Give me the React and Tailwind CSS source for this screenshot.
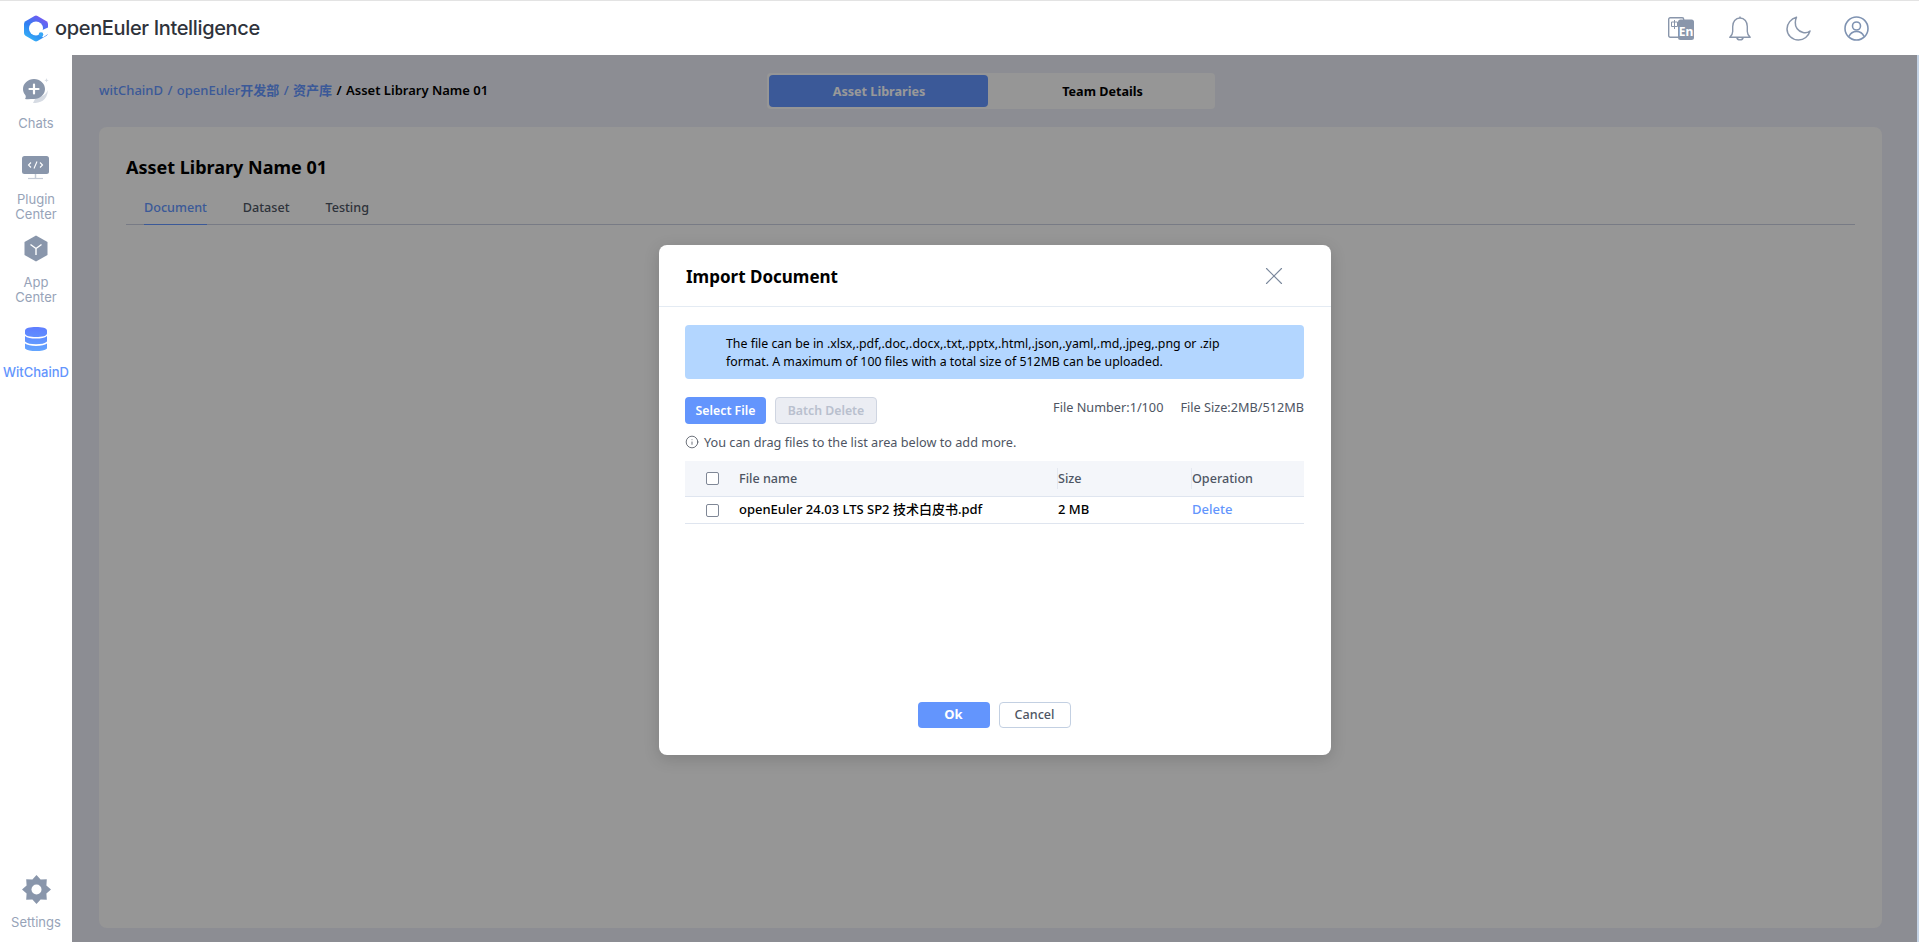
import { X, Info } from 'lucide-react';

const font = 'font-["Noto_Sans","Noto_Sans_CJK_SC",sans-serif]';

function Logo() {
    return (
        <svg width="24" height="27" viewBox="0 0 24 27" fill="none">
            <defs>
                <linearGradient id="logo-g" x1="4" y1="25" x2="20" y2="1" gradientUnits="userSpaceOnUse">
                    <stop offset="0" stopColor="#35b4f6" />
                    <stop offset="0.45" stopColor="#2f7ff2" />
                    <stop offset="1" stopColor="#8054f2" />
                </linearGradient>
            </defs>
            <path d="M10.5 1 Q12 .2 13.5 1 L22.5 6.3 Q24 7.2 24 9 V18 Q24 19.8 22.5 20.7 L13.5 26 Q12 26.8 10.5 26 L1.5 20.7 Q0 19.8 0 18 V9 Q0 7.2 1.5 6.3 Z" fill="url(#logo-g)" />
            <circle cx="12" cy="13.5" r="7" fill="#fff" />
            <path d="M14 17 L24 12.5 V19 L19 22.5 Z" fill="#fff" />
            <circle cx="17" cy="19.6" r="2.3" fill="#37a6f6" />
        </svg>
    );
}

function ChatsIcon() {
    return (
        <svg width="26" height="26" viewBox="0 0 26 26" fill="none">
            <path d="M10 25 C17 25 24 23 25 12 C23 17 18 19.5 13 19 Z" fill="#d6dbe3" />
            <path d="M23.5 0 l.6 1.7 1.6.6-1.6.6-.6 1.7-.6-1.7-1.6-.6 1.6-.6z" fill="#d6dbe3" />
            <path d="M11 1 C17 1 22 5.5 22 11 C22 16.5 17 21 11 21 C8 21 5 21.5 2 21 C3 20 3 18 2.3 17 C.8 15.4 0 13.2 0 11 C0 5.5 5 1 11 1 Z" fill="#8996ab" />
            <path d="M11 6.5 V15.5 M6.5 11 H15.5" stroke="#fff" strokeWidth="2.2" strokeLinecap="round" />
        </svg>
    );
}

function PluginIcon() {
    return (
        <svg width="27" height="24" viewBox="0 0 27 24" fill="none">
            <rect x="0" y="0" width="27" height="18" rx="2.5" fill="#8996ab" />
            <path d="M13.5 18 V22" stroke="#c5ccd7" strokeWidth="1.5" />
            <path d="M6 22.5 H21" stroke="#c5ccd7" strokeWidth="1.2" />
            <path d="M9 6.5 L6.5 9 L9 11.5 M18 6.5 L20.5 9 L18 11.5 M15 5.5 L12 12.5" stroke="#fff" strokeWidth="1.1" />
        </svg>
    );
}

function AppIcon() {
    return (
        <svg width="24" height="27" viewBox="0 0 24 27" fill="none">
            <path d="M12 .5 L23.5 7 V20 L12 26.5 L.5 20 V7 Z" fill="#8996ab" />
            <path d="M12 13.5 V20 M12 13.5 L6.5 9.5 M12 13.5 L17.5 9.5" stroke="#fff" strokeWidth="1.4" />
        </svg>
    );
}

function DatabaseIcon() {
    return (
        <svg width="22" height="24" viewBox="0 0 22 24" fill="none">
            <defs>
                <linearGradient id="db-g" x1="0" y1="0" x2="0" y2="24" gradientUnits="userSpaceOnUse">
                    <stop offset="0" stopColor="#5e7dff" />
                    <stop offset="1" stopColor="#63a5ff" />
                </linearGradient>
            </defs>
            <path d="M0 3.5 C0 1 5 0 11 0 C17 0 22 1 22 3.5 V6.5 C22 9 17 10 11 10 C5 10 0 9 0 6.5 Z" fill="url(#db-g)" />
            <path d="M0 9 C2 11 6 11.6 11 11.6 C16 11.6 20 11 22 9 V14.5 C20 16.6 16 17.2 11 17.2 C6 17.2 2 16.6 0 14.5 Z" fill="url(#db-g)" />
            <path d="M0 16.6 C2 18.4 6 18.9 11 18.9 C16 18.9 20 18.4 22 16.6 V21.5 C20 23.4 16 24 11 24 C6 24 2 23.4 0 21.5 Z" fill="url(#db-g)" />
        </svg>
    );
}

function SettingsIcon() {
    return (
        <svg width="29" height="29" viewBox="0 0 29 29" fill="none">
            <path
                d="M14.5 0 L18.6 4.6 L24.8 4.2 L24.4 10.4 L29 14.5 L24.4 18.6 L24.8 24.8 L18.6 24.4 L14.5 29 L10.4 24.4 L4.2 24.8 L4.6 18.6 L0 14.5 L4.6 10.4 L4.2 4.2 L10.4 4.6 Z"
                fill="#8996ab"
            />
            <circle cx="14.5" cy="14.5" r="5" fill="#fff" />
        </svg>
    );
}

function LangIcon() {
    return (
        <svg width="26" height="23" viewBox="0 0 26 23" fill="none">
            <rect x=".7" y=".7" width="15" height="19.5" rx="1.5" stroke="#8996ab" strokeWidth="1.4" />
            <path d="M3.5 5 H9.5 V9.5 H3.5 Z M6.5 3 V12" stroke="#8996ab" strokeWidth="1" />
            <rect x="10" y="2.5" width="16" height="20.5" rx="2.5" fill="#8996ab" />
            <text x="18" y="19" textAnchor="middle" fill="#fff" fontSize="12" fontWeight="700" fontFamily="Noto Sans">En</text>
        </svg>
    );
}

function BellIcon() {
    return (
        <svg width="22" height="25" viewBox="0 0 22 25" fill="none" stroke="#8996ab" strokeWidth="1.4" strokeLinejoin="round">
            <path d="M11 2 C6.5 2 3.7 6 3.7 10.5 V15.5 C3.7 18 2.2 20 .8 21.2 H21.2 C19.8 20 18.3 18 18.3 15.5 V10.5 C18.3 6 15.5 2 11 2 Z" />
            <path d="M11 2 V.5" />
            <path d="M7.8 21.5 C8.4 24.6 13.6 24.6 14.2 21.5" />
        </svg>
    );
}

function MoonIcon() {
    return (
        <svg width="25" height="25" viewBox="0 0 25 25" fill="none" stroke="#8996ab" strokeWidth="1.5" strokeLinejoin="round">
            <path d="M10.5 1.2 C5 2.8 1 7.5 1 13 C1 19 6 24 12.5 24 C18 24 22.5 20.3 24 15 C22 16.6 19.5 17.1 17 16.5 C12 15.4 9 11 9.3 6.5 C9.4 4.5 9.7 2.8 10.5 1.2 Z" />
        </svg>
    );
}

function UserIcon() {
    return (
        <svg width="25" height="25" viewBox="0 0 25 25" fill="none" stroke="#7f93b2" strokeWidth="1.6">
            <circle cx="12.5" cy="12.5" r="11.5" />
            <circle cx="12.5" cy="10" r="4" />
            <path d="M5 20.5 C6.5 17 9 15.5 12.5 15.5 C16 15.5 18.5 17 20 20.5" />
        </svg>
    );
}

function NavItem({ icon, label, active, className }) {
    return (
        <div className={`flex flex-col items-center ${className}`}>
            {icon}
            <div className={`text-center text-[13px] leading-[15px] font-["Inter",sans-serif] ${active ? 'text-[#6395fd] font-medium' : 'text-[#97a3b8]'}`}>
                {label}
            </div>
        </div>
    );
}

function Checkbox() {
    return <span className="block w-[13px] h-[13px] rounded-[2px] border border-[#7f8796] bg-white" />;
}

export default function App() {
    return (
        <div className={`w-full h-[942px] flex flex-col overflow-hidden bg-white ${font}`}>
            <header className="h-[55px] shrink-0 border-t border-[#e3e3e3] flex items-center pl-[24px]">
                <Logo />
                <div className='ml-[7px] text-[20px] font-["Inter",sans-serif] font-medium text-[#2f333b] tracking-[-0.35px]'>openEuler Intelligence</div>
                <div className="ml-auto flex items-center pr-[50px]">
                    <LangIcon />
                    <div className="ml-[35px]"><BellIcon /></div>
                    <div className="ml-[35px]"><MoonIcon /></div>
                    <div className="ml-[33px]"><UserIcon /></div>
                </div>
            </header>

            <div className="flex-1 flex min-h-0 bg-[#c3d2e4]">
                <aside className="w-[72px] shrink-0 flex flex-col items-center bg-white pt-[23px] pb-[12px]">
                    <NavItem icon={<ChatsIcon />} label="Chats" className="gap-[12px]" />
                    <NavItem icon={<PluginIcon />} label={<>Plugin<br />Center</>} className="mt-[25px] gap-[12px]" />
                    <NavItem icon={<AppIcon />} label={<>App<br />Center</>} className="mt-[13px] gap-[13px]" />
                    <NavItem icon={<DatabaseIcon />} label="WitChainD" active className="mt-[22px] gap-[14px]" />
                    <NavItem icon={<SettingsIcon />} label="Settings" className="mt-auto gap-[11px]" />
                </aside>

                <main className="relative flex-1 mr-[2px] bg-[#eaebf5] flex flex-col pl-[27px] pr-[35px] pb-[14px]">
                    <div className="h-[72px] shrink-0 flex items-center relative">
                        <div className="text-[13px] font-medium text-[#6395fd]">
                            witChainD <span className="mx-[1px]">/</span> openEuler<span className="font-bold">开发部</span> <span className="mx-[1px]">/</span> <span className="font-bold">资产库</span> <span className="text-black font-semibold"><span className="mx-[1px]">/</span> Asset Library Name 01</span>
                        </div>
                        <div className="absolute left-[668px] top-[18px] w-[448px] h-[36px] bg-[#fafafa] rounded-[4px] p-[2px] flex text-[12.6px] font-bold pt-[3px]">
                            <div className="w-[219px] -mt-px rounded-[4px] bg-[#6395fd] text-white flex items-center justify-center pt-[2px] pl-[1px]">Asset Libraries</div>
                            <div className="flex-1 text-black flex items-center justify-center pt-[2px] pl-[4px]">Team Details</div>
                        </div>
                    </div>

                    <section className="flex-1 bg-[#fafafa] rounded-[8px] px-[27px]">
                        <h1 className="mt-[27px] text-[18px] leading-[26px] font-bold text-black">Asset Library Name 01</h1>
                        <div className="mt-[16px] flex border-b border-[#c9cede] text-[12.6px] font-medium text-[#4e5563] h-[29px]">
                            <div className="ml-[18px] text-[#6395fd] border-b border-[#6395fd] h-[29px] leading-[24px]">Document</div>
                            <div className="ml-[36px] leading-[24px]">Dataset</div>
                            <div className="ml-[36px] leading-[24px]">Testing</div>
                        </div>
                    </section>

                    <div className="absolute inset-0 bg-black/40 flex items-center justify-center">
                        <div className="w-[672px] h-[510px] mt-[3px] ml-[1px] bg-white rounded-[8px] shadow-[0_4px_16px_rgba(0,0,0,0.15)] flex flex-col">
                            <div className="h-[62px] shrink-0 border-b border-[#e4ebf3] flex items-center justify-between pl-[27px] pr-[42px]">
                                <div className="text-[17px] font-bold text-black pt-[3px]">Import Document</div>
                                <X size={30} strokeWidth={0.9} className="text-[#7a889c]" />
                            </div>

                            <div className="flex-1 flex flex-col pl-[26px] pr-[27px]">
                                <div className="mt-[18px] h-[54px] bg-[#b3d6ff] rounded-[4px] pl-[41px] pr-[69px] pt-[10px] text-[12.35px] leading-[18px] text-black">
                                    The file can be in .xlsx,.pdf,.doc,.docx,.txt,.pptx,.html,.json,.yaml,.md,.jpeg,.png or .zip format. A maximum of 100 files with a total size of 512MB can be uploaded.
                                </div>

                                <div className="mt-[18px] flex items-start">
                                    <button className="w-[81px] h-[27px] pt-[2px] bg-[#6395fd] text-white text-[12.3px] font-semibold rounded-[4px]">Select File</button>
                                    <button className="ml-[9px] w-[102px] h-[27px] pt-[2px] bg-[#ebedf3] border border-[#cfd5e1] text-[#b9c0ce] text-[12.3px] font-semibold rounded-[4px]">Batch Delete</button>
                                    <div className="ml-auto flex gap-[17px] pt-[1px] text-[12.7px] leading-[18px] text-[#4e5563]">
                                        <span>File Number:1/100</span>
                                        <span>File Size:2MB/512MB</span>
                                    </div>
                                </div>

                                <div className="mt-[9px] flex items-center text-[12.7px] leading-[18px] text-[#4e5563]">
                                    <Info size={14} strokeWidth={1.3} className="mr-[5px] text-[#3f4652]" />
                                    You can drag files to the list area below to add more.
                                </div>

                                <div className="mt-[10px]">
                                    <div className="h-[36px] bg-[#f4f6fa] border-b border-[#dfe5ef] flex items-center text-[#4e5563] font-medium text-[12.6px]">
                                        <div className="w-[54px] pl-[21px]"><Checkbox /></div>
                                        <div className="w-[318px] pt-[2px]">File name</div>
                                        <div className="w-[134px] border-l border-[#e4e8f0] pt-[2px]">Size</div>
                                        <div className="border-l border-[#e4e8f0] pt-[2px]">Operation</div>
                                    </div>
                                    <div className="h-[27px] border-b border-[#dfe5ef] flex items-center text-black font-medium text-[13px]">
                                        <div className="w-[54px] pl-[21px]"><Checkbox /></div>
                                        <div className="w-[318px]">openEuler 24.03 LTS SP2 技术白皮书.pdf</div>
                                        <div className="w-[134px] pl-px">2 MB</div>
                                        <div className="pl-px text-[#6395fd]">Delete</div>
                                    </div>
                                </div>

                                <div className="mt-auto mb-[27px] flex justify-center gap-[9px] pr-[1px]">
                                    <button className="w-[72px] h-[26px] bg-[#6395fd] text-white text-[13px] font-bold rounded-[4px]">Ok</button>
                                    <button className="w-[72px] h-[26px] bg-white border border-[#c3d0e2] text-[#4e5563] text-[12.6px] font-medium rounded-[4px]">Cancel</button>
                                </div>
                            </div>
                        </div>
                    </div>
                </main>
            </div>
        </div>
    );
}
